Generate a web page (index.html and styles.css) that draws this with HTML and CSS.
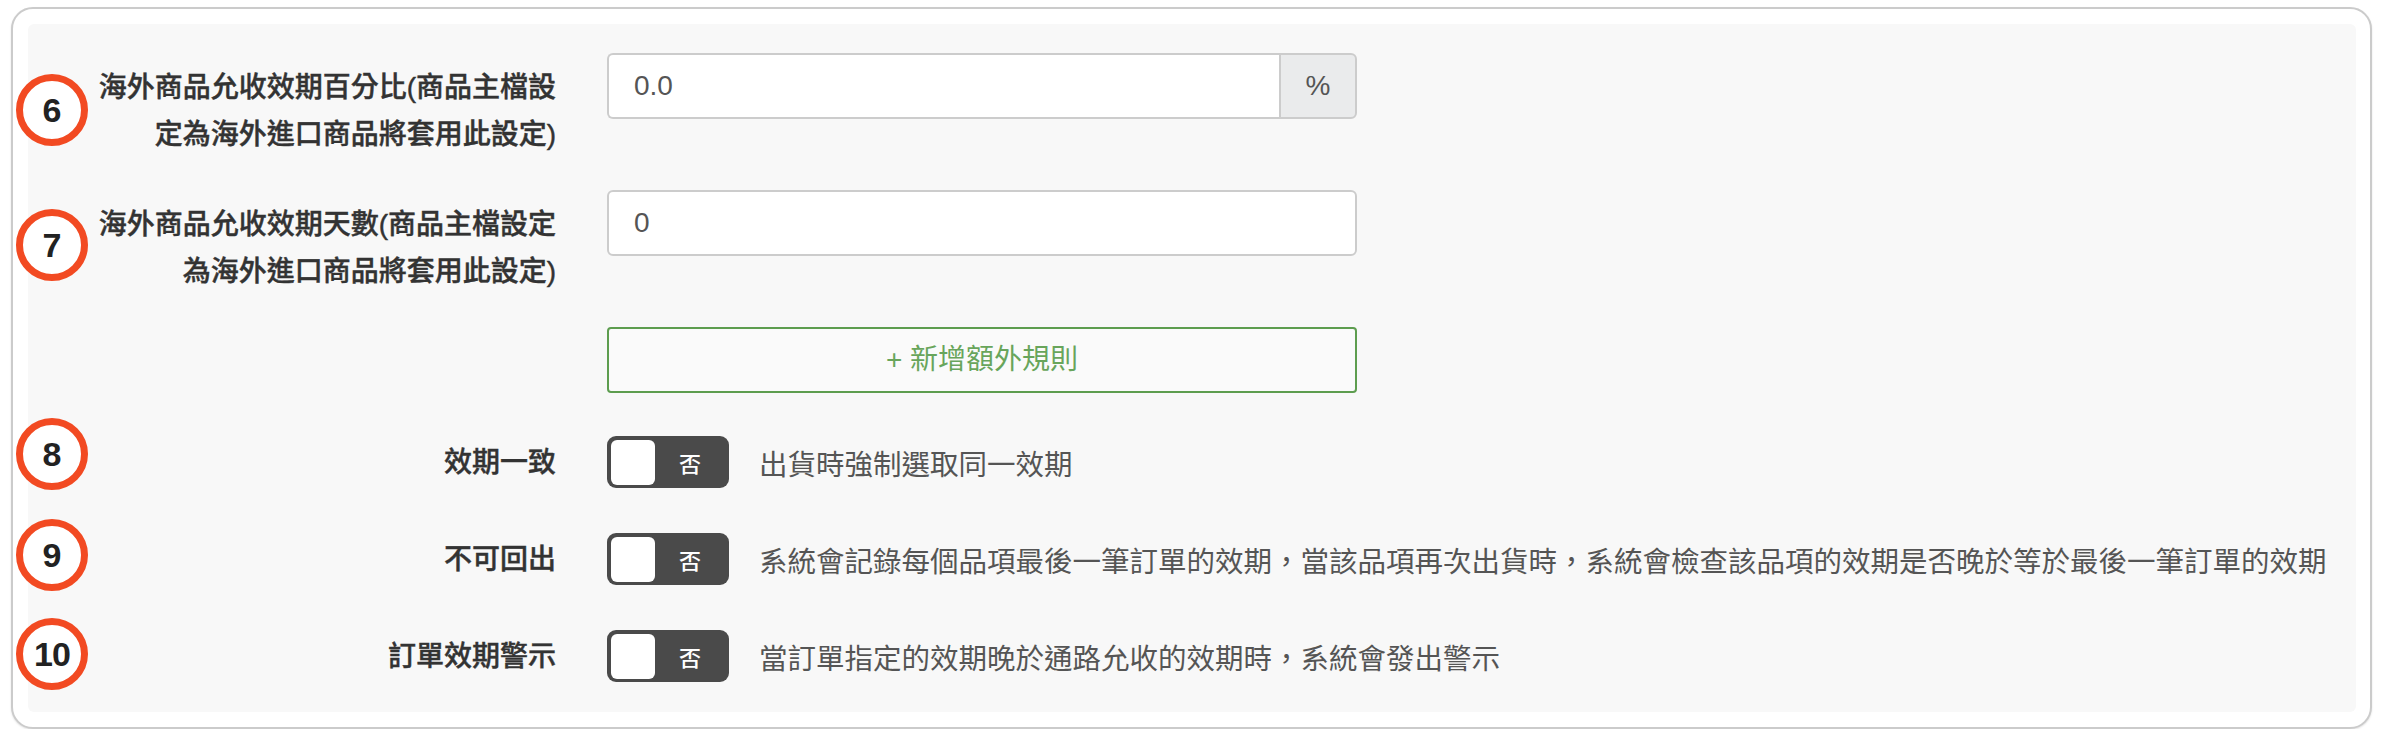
FILE: index.html
```html
<!DOCTYPE html>
<html lang="zh-Hant">
<head>
<meta charset="utf-8">
<title>效期設定</title>
<link rel="stylesheet" href="styles.css">
</head>
<body>
<div class="card">
  <div class="panel">
    <div class="row row-text">
      <span class="mark m6">6</span>
      <label class="label">海外商品允收效期百分比(商品主檔設定為海外進口商品將套用此設定)</label>
      <div class="control">
        <div class="input-group">
          <div class="input">0.0</div>
          <div class="addon">%</div>
        </div>
      </div>
    </div>
    <div class="row row-text">
      <span class="mark m7">7</span>
      <label class="label">海外商品允收效期天數(商品主檔設定為海外進口商品將套用此設定)</label>
      <div class="control">
        <div class="input full">0</div>
      </div>
    </div>
    <div class="row row-btn">
      <div class="label"></div>
      <div class="control">
        <button class="btn-add">+ 新增額外規則</button>
      </div>
    </div>
    <div class="row row-toggle">
      <span class="mark m8">8</span>
      <label class="label">效期一致</label>
      <div class="control">
        <div class="toggle"><span class="knob"></span><span class="toggle-text">否</span></div>
        <span class="desc">出貨時強制選取同一效期</span>
      </div>
    </div>
    <div class="row row-toggle">
      <span class="mark m9">9</span>
      <label class="label">不可回出</label>
      <div class="control">
        <div class="toggle"><span class="knob"></span><span class="toggle-text">否</span></div>
        <span class="desc">系統會記錄每個品項最後一筆訂單的效期，當該品項再次出貨時，系統會檢查該品項的效期是否晚於等於最後一筆訂單的效期</span>
      </div>
    </div>
    <div class="row row-toggle last">
      <span class="mark m10">10</span>
      <label class="label">訂單效期警示</label>
      <div class="control">
        <div class="toggle"><span class="knob"></span><span class="toggle-text">否</span></div>
        <span class="desc">當訂單指定的效期晚於通路允收的效期時，系統會發出警示</span>
      </div>
    </div>
  </div>
</div>
</body>
</html>
```
FILE: styles.css
```css
* { box-sizing: border-box; }
html, body { margin: 0; padding: 0; background: #ffffff; }
body {
  font-family: "Liberation Sans", "Noto Sans CJK TC", sans-serif;
  color: #333;
}
.card {
  margin: 7px 0 0 11px;
  width: 2361px;
  height: 722px;
  border: 2px solid #cbcbcb;
  border-radius: 22px;
  padding: 15px 14px 15px 15px;
  background: #fff;
  box-shadow: 0 1px 2px rgba(0,0,0,0.12);
}
.panel {
  background: #f8f8f8;
  border-radius: 6px;
  height: 100%;
  padding: 29px 0 30px 0;
}
.row {
  position: relative;
  display: flex;
}
.row-text { margin-bottom: 32px; align-items: flex-start; }
.row-btn { margin-bottom: 43px; }
.row-toggle { margin-bottom: 45px; align-items: center; }
.row-toggle.last { margin-bottom: 0; }
.label {
  flex: 0 0 528px;
  padding-left: 58px;
  text-align: right;
  font-size: 28px;
  font-weight: 500;
  line-height: 47px;
  color: #333;
  -webkit-text-stroke: 0.4px #333;
}
.row-text .label { padding-top: 11px; }
.control {
  margin-left: 51px;
  display: flex;
  align-items: center;
}
.input-group {
  display: flex;
  width: 750px;
  height: 66px;
}
.input {
  flex: 1;
  height: 66px;
  border: 2px solid #cccccc;
  border-radius: 6px 0 0 6px;
  border-right: 0;
  background: #fff;
  padding-left: 25px;
  font-size: 28px;
  line-height: 62px;
  color: #555;
}
.input.full {
  flex: none;
  width: 750px;
  border-right: 2px solid #cccccc;
  border-radius: 6px;
}
.addon {
  width: 78px;
  height: 66px;
  border: 2px solid #cccccc;
  border-radius: 0 6px 6px 0;
  background: #eaebec;
  text-align: center;
  font-size: 28px;
  line-height: 62px;
  color: #555;
}
.btn-add {
  width: 750px;
  height: 66px;
  border: 2px solid #5d9d4f;
  border-radius: 4px;
  background: #fafafa;
  color: #68a55b;
  font-family: "Liberation Sans", "Noto Sans CJK TC", sans-serif;
  font-size: 28px;
  padding: 0;
  line-height: 62px;
}
.toggle {
  width: 122px;
  height: 52px;
  background: #4a4a4a;
  border-radius: 9px;
  display: flex;
  align-items: center;
  padding: 0 4px;
}
.knob {
  width: 44px;
  height: 45px;
  background: #fff;
  border-radius: 6px;
}
.toggle-text {
  flex: 1;
  text-align: center;
  color: #fff;
  font-size: 22px;
  font-weight: 500;
}
.desc {
  margin-left: 30px;
  font-size: 28.5px;
  color: #555;
  white-space: nowrap;
}
.mark {
  position: absolute;
  left: -12px;
  width: 72px;
  height: 72px;
  border: 7px solid #f24a22;
  border-radius: 50%;
  background: #fff;
  display: flex;
  align-items: center;
  justify-content: center;
  font-size: 34px;
  font-weight: 700;
  color: #222;
}
.m6 { top: 21px; }
.m7 { top: 19px; }
.m8 { top: -18px; }
.m9 { top: -14px; }
.m10 { top: -12px; letter-spacing: -1px; }
```
